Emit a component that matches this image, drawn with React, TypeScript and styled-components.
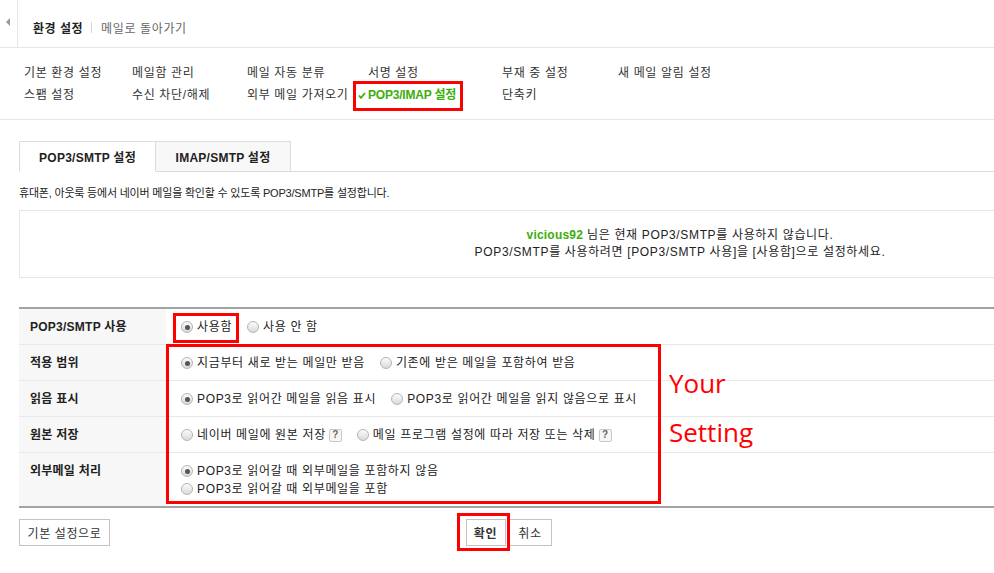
import React from "react";
import styled, { createGlobalStyle, css } from "styled-components";

const FONT = `"Liberation Sans", "Noto Sans CJK KR", sans-serif`;
const GREEN = "#3cae0a";

const GlobalStyle = createGlobalStyle`
  html, body { margin: 0; padding: 0; background: #fff; }
  html { overflow: hidden; }
  body {
    font-family: ${FONT};
    font-size: 12px;
    letter-spacing: 0.65px;
    color: #333;
  }
  * { box-sizing: border-box; }
`;

const Page = styled.div`
  width: 994px;
  padding-bottom: 30px;
`;

/* ---------- header ---------- */
const Header = styled.header`
  display: flex;
  height: 48px;
  border-bottom: 1px solid #e6e6e6;
`;

const Handle = styled.div`
  width: 18px;
  border-right: 1px solid #e6e6e6;
  display: flex;
  justify-content: flex-start;
  padding: 18px 0 0 6px;
`;

const Triangle = styled.span`
  width: 0;
  height: 0;
  border-top: 4px solid transparent;
  border-bottom: 4px solid transparent;
  border-right: 4px solid #999;
`;

const HeaderTitleBar = styled.div`
  display: flex;
  align-items: center;
  padding: 7px 0 0 15px;
`;

const Title = styled.h1`
  margin: 0;
  font-size: 12px;
  font-weight: bold;
  letter-spacing: 0.5px;
  color: #222;
`;

const Sep = styled.span`
  width: 1px;
  height: 11px;
  background: #d6d6d6;
  margin: 0 9px 0 8px;
`;

const BackLink = styled.a`
  font-size: 12px;
  color: #666;
  text-decoration: none;
`;

/* ---------- menu ---------- */
const Menu = styled.nav`
  display: grid;
  grid-template-columns: 108px 115px 121px 134px 116px auto;
  grid-auto-flow: column;
  grid-template-rows: 22px 22px;
  padding: 14px 0 13px 24px;
  border-bottom: 1px solid #e6e6e6;
`;

const MenuItem = styled.a<{ $active?: boolean }>`
  position: relative;
  line-height: 22px;
  font-size: 12px;
  color: #333;
  text-decoration: none;
  white-space: nowrap;
  ${(p) =>
    p.$active &&
    css`
      color: ${GREEN};
      font-weight: bold;
      letter-spacing: -0.2px;
    `}
`;

const Check = styled.svg`
  position: absolute;
  left: -10px;
  top: 8px;
`;

const Highlight = styled.span<{ $l: number; $t: number; $w: number; $h: number }>`
  position: absolute;
  left: ${(p) => p.$l}px;
  top: ${(p) => p.$t}px;
  width: ${(p) => p.$w}px;
  height: ${(p) => p.$h}px;
  border: 3px solid #f00;
  pointer-events: none;
`;

/* ---------- content ---------- */
const Content = styled.main`
  padding-left: 19px;
`;

const TabBar = styled.div`
  display: flex;
  margin-top: 21px;
  border-bottom: 1px solid #dcdcdc;
`;

const Tab = styled.div<{ $active?: boolean }>`
  height: 31px;
  margin-bottom: -1px;
  display: flex;
  align-items: center;
  justify-content: center;
  font-weight: bold;
  font-size: 12px;
  letter-spacing: 0.25px;
  color: #222;
  border: 1px solid #dcdcdc;
  ${(p) =>
    p.$active
      ? css`
          width: 137px;
          background: #fff;
          border-bottom-color: #fff;
        `
      : css`
          width: 135px;
          background: #f8f8f8;
          border-left: none;
        `}
`;

const Desc = styled.p`
  margin: 13px 0 0;
  font-size: 11px;
  letter-spacing: -0.2px;
  line-height: 16px;
  color: #222;
`;

const InfoBox = styled.div`
  margin-top: 9px;
  border-top: 1px solid #e6e6e6;
  border-bottom: 1px solid #e6e6e6;
  border-left: 1px solid #e6e6e6;
  padding: 16px 0 16px 346px;
  text-align: center;
  line-height: 17px;
  font-size: 12px;
  color: #222;
`;

const UserId = styled.strong`
  color: ${GREEN};
  letter-spacing: 0.2px;
`;

const SettingsArea = styled.section`
  position: relative;
  margin-top: 29px;
  border-top: 2px solid #a3a3a3;
  border-bottom: 2px solid #a3a3a3;
`;

const Row = styled.div<{ $last?: boolean }>`
  display: grid;
  grid-template-columns: 147px 1fr;
  border-bottom: ${(p) => (p.$last ? "none" : "1px solid #e8e8e8")};
`;

const Label = styled.div`
  background: #f7f7f7;
  padding: 9px 11px 8px;
  line-height: 18px;
  font-weight: bold;
  letter-spacing: 0.25px;
  color: #222;
`;

const Value = styled.div<{ $stack?: boolean }>`
  padding: 9px 15px 8px;
  line-height: 18px;
  display: flex;
  flex-direction: ${(p) => (p.$stack ? "column" : "row")};
  align-items: flex-start;
`;

const Option = styled.label`
  display: inline-flex;
  align-items: center;
  margin-right: 15px;
  white-space: nowrap;
  color: #222;
`;

const Radio = styled.span<{ $on?: boolean }>`
  width: 12px;
  height: 12px;
  border-radius: 50%;
  border: 1px solid #b4b4b4;
  background: linear-gradient(#fbfbfb, #dadada);
  margin-right: 4px;
  display: inline-flex;
  align-items: center;
  justify-content: center;
  &::after {
    content: "";
    width: 5px;
    height: 5px;
    border-radius: 50%;
    background: ${(p) => (p.$on ? "#555" : "transparent")};
  }
`;

const Help = styled.span`
  display: inline-flex;
  align-items: center;
  justify-content: center;
  width: 13px;
  height: 13px;
  margin-left: 3px;
  border: 1px solid #c9c9c9;
  border-radius: 2px;
  background: #f6f6f6;
  font-size: 10px;
  font-weight: bold;
  letter-spacing: 0;
  color: #666;
  line-height: 1;
`;

const Note = styled.div`
  position: absolute;
  left: 650px;
  top: 50px;
  color: #f00;
  font-family: "Open Sans", "Noto Sans", sans-serif;
  font-size: 26px;
  letter-spacing: 0;
  line-height: 49px;
`;

/* ---------- footer ---------- */
const Footer = styled.footer`
  display: grid;
  grid-template-columns: 1fr auto 1fr;
  margin-top: 11px;
  align-items: start;
`;

const Button = styled.button<{ $primary?: boolean; $w: number }>`
  height: 27px;
  width: ${(p) => p.$w}px;
  padding: 0;
  border: 1px solid #c3c3c3;
  background: #fff;
  font-family: ${FONT};
  font-size: 12px;
  letter-spacing: 0.6px;
  color: #333;
  font-weight: ${(p) => (p.$primary ? "bold" : "normal")};
  cursor: pointer;
`;

const LeftSlot = styled.div`
  justify-self: start;
`;

const CenterGroup = styled.div`
  position: relative;
  display: flex;
  gap: 3px;
  margin-left: 4px;
`;

const radioRows: {
  label: string;
  stack?: boolean;
  options: { text: string; on?: boolean; help?: boolean }[];
}[] = [
  {
    label: "적용 범위",
    options: [
      { text: "지금부터 새로 받는 메일만 받음", on: true },
      { text: "기존에 받은 메일을 포함하여 받음" },
    ],
  },
  {
    label: "읽음 표시",
    options: [
      { text: "POP3로 읽어간 메일을 읽음 표시", on: true },
      { text: "POP3로 읽어간 메일을 읽지 않음으로 표시" },
    ],
  },
  {
    label: "원본 저장",
    options: [
      { text: "네이버 메일에 원본 저장", help: true },
      { text: "메일 프로그램 설정에 따라 저장 또는 삭제", help: true },
    ],
  },
  {
    label: "외부메일 처리",
    stack: true,
    options: [
      { text: "POP3로 읽어갈 때 외부메일을 포함하지 않음", on: true },
      { text: "POP3로 읽어갈 때 외부메일을 포함" },
    ],
  },
];

export default function App() {
  return (
    <Page>
      <GlobalStyle />
      <Header>
        <Handle>
          <Triangle />
        </Handle>
        <HeaderTitleBar>
          <Title>환경 설정</Title>
          <Sep />
          <BackLink href="#">메일로 돌아가기</BackLink>
        </HeaderTitleBar>
      </Header>

      <Menu>
        <MenuItem>기본 환경 설정</MenuItem>
        <MenuItem>스팸 설정</MenuItem>
        <MenuItem>메일함 관리</MenuItem>
        <MenuItem>수신 차단/해제</MenuItem>
        <MenuItem>메일 자동 분류</MenuItem>
        <MenuItem>외부 메일 가져오기</MenuItem>
        <MenuItem>서명 설정</MenuItem>
        <MenuItem $active>
          <Check width="8" height="7" viewBox="0 0 8 7">
            <polyline points="1,3.5 3,5.8 7,1" fill="none" stroke={GREEN} strokeWidth="1.8" />
          </Check>
          POP3/IMAP 설정
          <Highlight $l={-15} $t={-3} $w={110} $h={30} />
        </MenuItem>
        <MenuItem>부재 중 설정</MenuItem>
        <MenuItem>단축키</MenuItem>
        <MenuItem>새 메일 알림 설정</MenuItem>
      </Menu>

      <Content>
        <TabBar>
          <Tab $active>POP3/SMTP 설정</Tab>
          <Tab>IMAP/SMTP 설정</Tab>
        </TabBar>

        <Desc>휴대폰, 아웃룩 등에서 네이버 메일을 확인할 수 있도록 POP3/SMTP를 설정합니다.</Desc>

        <InfoBox>
          <UserId>vicious92</UserId> 님은 현재 POP3/SMTP를 사용하지 않습니다.
          <br />
          POP3/SMTP를 사용하려면 [POP3/SMTP 사용]을 [사용함]으로 설정하세요.
        </InfoBox>

        <SettingsArea>
          <Row>
            <Label>POP3/SMTP 사용</Label>
            <Value>
              <Option>
                <Radio $on />
                사용함
              </Option>
              <Option>
                <Radio />
                사용 안 함
              </Option>
            </Value>
          </Row>
          {radioRows.map((r, i) => (
            <Row key={r.label} $last={i === radioRows.length - 1}>
              <Label>{r.label}</Label>
              <Value $stack={r.stack}>
                {r.options.map((o) => (
                  <Option key={o.text}>
                    <Radio $on={o.on} />
                    {o.text}
                    {o.help && <Help>?</Help>}
                  </Option>
                ))}
              </Value>
            </Row>
          ))}
          <Highlight $l={154} $t={4} $w={66} $h={30} />
          <Highlight $l={147} $t={35} $w={495} $h={160} />
          <Note>
            Your
            <br />
            Setting
          </Note>
        </SettingsArea>

        <Footer>
          <LeftSlot>
            <Button $w={91}>기본 설정으로</Button>
          </LeftSlot>
          <CenterGroup>
            <Button $primary $w={40}>
              확인
            </Button>
            <Button $w={43}>취소</Button>
            <Highlight $l={-9} $t={-6} $w={53} $h={38} />
          </CenterGroup>
          <div />
        </Footer>
      </Content>
    </Page>
  );
}
